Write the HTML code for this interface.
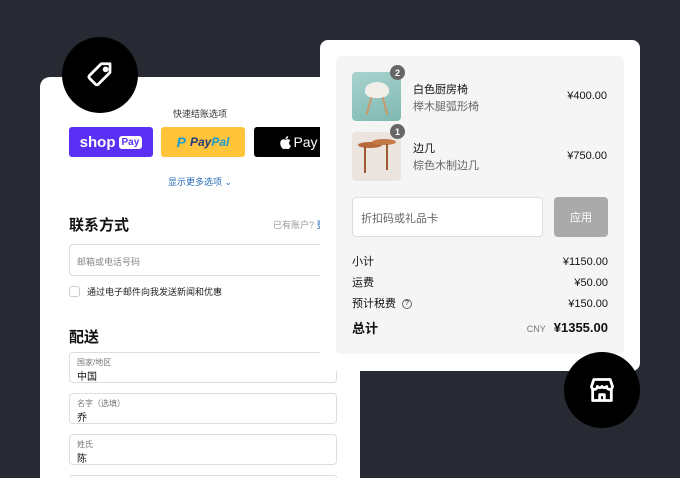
<!DOCTYPE html>
<html><head><meta charset="utf-8"><style>
*{margin:0;padding:0;box-sizing:border-box}
html,body{width:680px;height:478px;overflow:hidden}
body{background:#272a33;position:relative;font-family:"Liberation Sans","Noto Sans CJK SC",sans-serif;color:#111}
.a{position:absolute}
.left{left:40px;top:77px;width:320px;height:401px;background:#fff;border-radius:10px 10px 0 0;overflow:hidden}
.btn{position:absolute;top:50px;width:84px;height:30px;border-radius:3px;display:flex;align-items:center;justify-content:center;font-weight:bold}
.field{position:absolute;left:29px;width:268px;border:1px solid #ddd;border-radius:4px;background:#fff}
.lab{font-size:8px;color:#777;position:absolute;left:7px;top:4px}
.val{font-size:10px;color:#111;position:absolute;left:7px;top:15px}
.right{left:320px;top:40px;width:320px;height:331px;background:#fff;border-radius:8px}
.inner{position:absolute;left:16px;top:16px;width:288px;height:298px;background:#f5f5f5;border-radius:5px}
.row{position:absolute;left:16px;right:16px;font-size:11px;display:flex;justify-content:space-between;align-items:center;line-height:14px}
.circle{position:absolute;width:76px;height:76px;border-radius:50%;background:#000;display:flex;align-items:center;justify-content:center}
.badge{position:absolute;width:15px;height:15px;border-radius:50%;background:#666;color:#fff;font-size:9px;font-weight:bold;display:flex;align-items:center;justify-content:center}
</style></head><body>
<div class="a left">
  <div class="a" style="left:0;width:320px;top:30px;text-align:center;font-size:9px;color:#333">快速结账选项</div>
  <div class="btn" style="left:29px;background:#5a31f4;color:#fff;font-size:15px">shop<span style="background:#fff;color:#5a31f4;font-size:10px;border-radius:3px;padding:1px 3px;margin-left:3px">Pay</span></div>
  <div class="btn" style="left:121px;background:#ffc439;color:#253b80;font-size:12px;font-style:italic"><span style="color:#179bd7;font-size:14px;margin-right:4px">P</span>Pay<span style="color:#179bd7">Pal</span></div>
  <div class="btn" style="left:214px;width:90px;background:#000;color:#fff;font-size:14px;font-weight:normal"><svg width="11" height="13" viewBox="0 0 17 20" fill="#fff" style="margin-right:2px"><path d="M14 10.6c0-2.4 2-3.6 2.1-3.7-1.2-1.7-3-1.9-3.6-2-1.5-.2-3 .9-3.8.9-.8 0-2-.9-3.300-.9C3.7 5 2.1 6 1.2 7.5-.6 10.6.7 15.3 2.5 17.8c.9 1.2 1.9 2.6 3.2 2.6 1.3-.1 1.8-.8 3.3-.8s2 .8 3.3.8c1.4 0 2.3-1.3 3.1-2.5 1-1.4 1.4-2.8 1.4-2.900 0 0-2.8-1.100-2.8-4.4zM11.6 3.3c.7-.9 1.2-2 1-3.2-1 0-2.3.7-3 1.6-.7.8-1.2 2-1.100 3.1 1.2.1 2.3-.6 3.100-1.5z"/></svg>Pay</div>
  <div class="a" style="left:0;width:320px;top:98px;text-align:center;font-size:9px;color:#2a6ebb">显示更多选项 ⌄</div>
  <div class="a" style="left:29px;top:137px;font-size:15px;font-weight:bold">联系方式</div>
  <div class="a" style="left:233px;top:141px;font-size:9px;color:#999">已有账户? <span style="color:#2a6ebb">登</span></div>
  <div class="field" style="top:167px;height:32px"><div class="lab" style="top:10px;font-size:9px;color:#888">邮箱或电话号码</div></div>
  <div class="a" style="left:29px;top:209px;width:11px;height:11px;border:1px solid #ccc;border-radius:3px"></div>
  <div class="a" style="left:47px;top:208px;font-size:9px;color:#222">通过电子邮件向我发送新闻和优惠</div>
  <div class="a" style="left:29px;top:249px;font-size:15px;font-weight:bold">配送</div>
  <div class="field" style="top:275px;height:31px"><div class="lab">国家/地区</div><div class="val">中国</div></div>
  <div class="field" style="top:316px;height:31px"><div class="lab">名字（选填）</div><div class="val">乔</div></div>
  <div class="field" style="top:357px;height:31px"><div class="lab">姓氏</div><div class="val">陈</div></div>
  <div class="field" style="top:398px;height:3px;border-bottom:none;border-radius:4px 4px 0 0"></div>
</div>
<div class="circle" style="left:62px;top:37px"><svg width="30" height="30" viewBox="0 0 24 24" fill="none" stroke="#fff" stroke-width="2.2" stroke-linejoin="round"><path d="M13 3h7v7l-9.5 9.5a1.5 1.5 0 0 1-2 0l-5-5a1.5 1.5 0 0 1 0-2z"/><circle cx="16.5" cy="7.5" r="1.2"/></svg></div>
<div class="a right"><div class="inner">
  <div class="a" style="left:16px;top:16px;width:49px;height:49px;border-radius:4px;background:linear-gradient(160deg,#a9d3cf,#7fb8b2)"><div class="a" style="left:13px;top:10px;width:24px;height:16px;background:#f2eeea;border-radius:50% 50% 40% 40%"></div><div class="a" style="left:16px;top:25px;width:2px;height:18px;background:#c89a6a;transform:rotate(15deg)"></div><div class="a" style="left:32px;top:25px;width:2px;height:18px;background:#c89a6a;transform:rotate(-15deg)"></div></div>
  <div class="badge" style="left:54px;top:9px">2</div>
  <div class="a" style="left:77px;top:25px;font-size:11px">白色厨房椅</div>
  <div class="a" style="left:77px;top:42px;font-size:11px;color:#666">榉木腿弧形椅</div>
  <div class="a" style="right:17px;top:34px;font-size:11px">¥400.00</div>
  <div class="a" style="left:16px;top:76px;width:49px;height:49px;border-radius:4px;background:#ece4de"><div class="a" style="left:6px;top:10px;width:24px;height:6px;background:#b8693a;border-radius:50%"></div><div class="a" style="left:20px;top:7px;width:24px;height:6px;background:#c47a45;border-radius:50%"></div><div class="a" style="left:12px;top:15px;width:2px;height:26px;background:#9b5a30"></div><div class="a" style="left:34px;top:12px;width:2px;height:26px;background:#9b5a30"></div></div>
  <div class="badge" style="left:54px;top:68px">1</div>
  <div class="a" style="left:77px;top:84px;font-size:11px">边几</div>
  <div class="a" style="left:77px;top:101px;font-size:11px;color:#666">棕色木制边几</div>
  <div class="a" style="right:17px;top:94px;font-size:11px">¥750.00</div>
  <div class="a" style="left:16px;top:141px;width:191px;height:40px;background:#fff;border:1px solid #ddd;border-radius:4px;font-size:11px;color:#666;padding:12px 8px">折扣码或礼品卡</div>
  <div class="a" style="left:218px;top:141px;width:54px;height:40px;background:#aaa;border-radius:4px;color:#fff;font-size:11px;display:flex;align-items:center;justify-content:center">应用</div>
  <div class="row" style="top:199px"><span>小计</span><span>¥1150.00</span></div>
  <div class="row" style="top:220px"><span>运费</span><span>¥50.00</span></div>
  <div class="row" style="top:241px"><span style="display:flex;align-items:center">预计税费 <span style="display:inline-block;width:10px;height:10px;border:1px solid #666;border-radius:50%;font-size:7px;text-align:center;line-height:8px;margin-left:6px">?</span></span><span>¥150.00</span></div>
  <div class="row" style="top:265px;font-size:13px;font-weight:bold"><span>总计</span><span><span style="font-size:9px;color:#777;font-weight:normal;margin-right:8px">CNY</span>¥1355.00</span></div>
</div></div>
<div class="circle" style="left:564px;top:352px"><svg width="28" height="28" viewBox="0 0 24 24" fill="none" stroke="#fff" stroke-width="2.4" stroke-linejoin="round"><path d="M5 3h14l2 6a2.5 2.5 0 0 1-5 0a2.5 2.5 0 0 1-4 0a2.5 2.5 0 0 1-4 0a2.5 2.5 0 0 1-5 0z"/><path d="M4 11v10h16V11"/><path d="M10 21v-5h4v5"/></svg></div>
</body></html>
